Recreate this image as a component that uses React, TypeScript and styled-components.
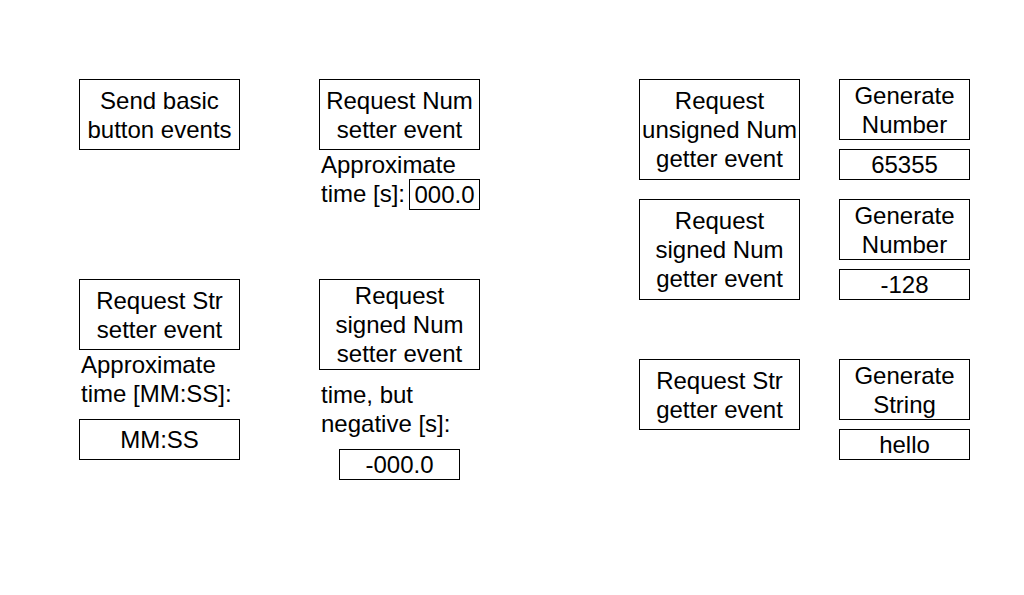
import styled, { createGlobalStyle } from 'styled-components';

const GlobalStyle = createGlobalStyle`
  html, body {
    margin: 0;
    padding: 0;
    background: #ffffff;
  }
`;

type BoxProps = {
  $width?: number;
  $height: number;
};

function App() {
  return (
    <>
      <GlobalStyle />
      <StyledPage>
        <StyledSetterGrid>
          <StyledCell>
            <StyledActionBox $height={71}>{'Send basic\nbutton events'}</StyledActionBox>
          </StyledCell>

          <StyledCell>
            <StyledActionBox $height={71}>{'Request Num\nsetter event'}</StyledActionBox>
            <StyledCaption>
              Approximate
              <StyledCaptionRow>
                <span>time [s]:</span>
                <StyledValueBox $width={71} $height={31}>
                  000.0
                </StyledValueBox>
              </StyledCaptionRow>
            </StyledCaption>
          </StyledCell>

          <StyledCell>
            <StyledActionBox $height={71}>{'Request Str\nsetter event'}</StyledActionBox>
            <StyledCaption>{'Approximate\ntime [MM:SS]:'}</StyledCaption>
            <StyledValueBox $width={161} $height={41} $gap={11}>
              MM:SS
            </StyledValueBox>
          </StyledCell>

          <StyledCell>
            <StyledActionBox $height={91}>
              {'Request\nsigned Num\nsetter event'}
            </StyledActionBox>
            <StyledCaption $gap={10}>{'time, but\nnegative [s]:'}</StyledCaption>
            <StyledValueBox $width={121} $height={31} $gap={11} $centered>
              -000.0
            </StyledValueBox>
          </StyledCell>
        </StyledSetterGrid>

        <StyledGetterGrid>
          <StyledActionBox $height={101}>
            {'Request\nunsigned Num\ngetter event'}
          </StyledActionBox>
          <StyledCell>
            <StyledActionBox $width={131} $height={61}>
              {'Generate\nNumber'}
            </StyledActionBox>
            <StyledValueBox $width={131} $height={31} $gap={9}>
              65355
            </StyledValueBox>
          </StyledCell>

          <StyledActionBox $height={101}>
            {'Request\nsigned Num\ngetter event'}
          </StyledActionBox>
          <StyledCell>
            <StyledActionBox $width={131} $height={61}>
              {'Generate\nNumber'}
            </StyledActionBox>
            <StyledValueBox $width={131} $height={31} $gap={9}>
              -128
            </StyledValueBox>
          </StyledCell>

          <StyledActionBox $height={71}>{'Request Str\ngetter event'}</StyledActionBox>
          <StyledCell>
            <StyledActionBox $width={131} $height={61}>
              {'Generate\nString'}
            </StyledActionBox>
            <StyledValueBox $width={131} $height={31} $gap={9}>
              hello
            </StyledValueBox>
          </StyledCell>
        </StyledGetterGrid>
      </StyledPage>
    </>
  );
}

const StyledPage = styled.div`
  display: flex;
  align-items: flex-start;
  width: 1024px;
  height: 595px;
  box-sizing: border-box;
  padding: 79px 0 0 79px;

  font-family: 'Liberation Sans', Arial, Helvetica, sans-serif;
  font-size: 24px;
  line-height: 29px;
  color: #000000;
`;

const StyledSetterGrid = styled.div`
  display: grid;
  grid-template-columns: 161px 161px;
  grid-template-rows: 200px auto;
  column-gap: 79px;
`;

// the getter side sits further right, with its own rhythm of rows
const StyledGetterGrid = styled.div`
  display: grid;
  grid-template-columns: 161px 131px;
  grid-template-rows: 120px 160px auto;
  column-gap: 39px;
  margin-left: 159px;
  align-items: start;
`;

const StyledCell = styled.div`
  display: flex;
  flex-direction: column;
  align-items: flex-start;
`;

const StyledActionBox = styled.div<BoxProps>`
  box-sizing: border-box;
  width: ${({ $width }) => $width ?? 161}px;
  height: ${({ $height }) => $height}px;
  border: 1px solid #000000;

  display: flex;
  align-items: center;
  justify-content: center;
  text-align: center;
  white-space: pre-line;
`;

const StyledValueBox = styled.div<BoxProps & { $gap?: number; $centered?: boolean }>`
  box-sizing: border-box;
  width: ${({ $width }) => $width}px;
  height: ${({ $height }) => $height}px;
  margin-top: ${({ $gap }) => $gap ?? 0}px;
  align-self: ${({ $centered }) => ($centered ? 'center' : 'auto')};
  border: 1px solid #000000;

  display: flex;
  align-items: center;
  justify-content: center;
`;

const StyledCaption = styled.div<{ $gap?: number }>`
  box-sizing: border-box;
  width: 161px;
  margin-top: ${({ $gap }) => $gap ?? 0}px;
  padding-left: 2px;
  white-space: pre-line;
`;

const StyledCaptionRow = styled.div`
  display: flex;
  justify-content: space-between;
  align-items: flex-start;
  margin-left: -2px;
  padding-left: 2px;
`;

export default App;
